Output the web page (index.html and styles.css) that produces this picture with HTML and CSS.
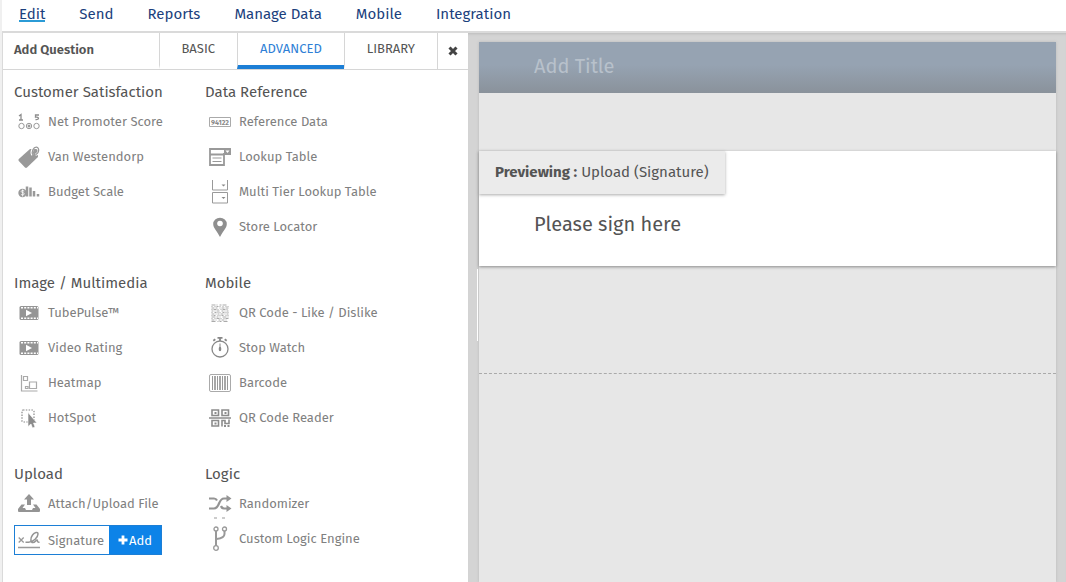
FILE: index.html
```html
<!DOCTYPE html>
<html lang="en">
<head>
<meta charset="utf-8">
<meta name="viewport" content="width=device-width, initial-scale=1">
<title>Survey editor</title>
<link rel="stylesheet" href="styles.css">
</head>
<body>
<div class="app">
  <nav class="main-nav">
    <a class="active" href="#edit">Edit</a>
    <a href="#send">Send</a>
    <a href="#reports">Reports</a>
    <a href="#data">Manage Data</a>
    <a href="#mobile">Mobile</a>
    <a href="#integration">Integration</a>
  </nav>
  <div class="workspace">
    <aside class="library">
      <header class="tabs">
        <h2 class="tabs-title">Add Question</h2>
        <button class="tab" type="button">BASIC</button>
        <button class="tab selected" type="button">ADVANCED</button>
        <button class="tab" type="button">LIBRARY</button>
        <button class="close" type="button" aria-label="Close"><svg width="10" height="10" viewBox="0 0 10 10"><path d="M1.5 1.5l7 7M8.500 1.500l-7 7" stroke="#444" stroke-width="3"/></svg></button>
      </header>
      <div class="groups">
        <section class="group">
          <h3>Customer Satisfaction</h3>
          <ul>
            <li><a href="#nps"><svg class="icon" viewBox="0 0 22 22"><path d="M1 5l2-1.500V9M1 9h4M21 4h-3.500v2.200c4-.7 4 2.800 0 2.300" fill="none" stroke="#8d8d8d" stroke-width="1.300"/><g fill="none" stroke="#999"><circle cx="3.500" cy="15" r="2.700"/><circle cx="11" cy="15" r="2.700"/><circle cx="18.500" cy="15" r="2.700"/></g><circle cx="11" cy="15" r="1.500" fill="#999"/></svg>Net Promoter Score</a></li>
            <li><a href="#westendorp"><svg class="icon" viewBox="0 0 22 22"><path d="M12 3h6q2 0 2 2v6L9 21.500q-1 .8-2 0L.8 15q-.8-1 0-2z" fill="#999"/><path d="M14.500 9c-2-3 .5-8.500 4-8.200 3.500.5 3 7-1 7.700" fill="none" stroke="#fff" stroke-width="2.400"/><path d="M15 9c-2-3 .5-8 3.500-7.800 3.500.5 2.500 6.500-1 7.300" fill="none" stroke="#999" stroke-width="1.300"/></svg>Van Westendorp</a></li>
            <li><a href="#budget"><svg class="icon" viewBox="0 0 22 22"><circle cx="4.500" cy="12" r="4.200" fill="#999"/><path d="M6.200 10q-3-1.500-3 .5c0 1.500 3 .5 3 2.300 0 1.800-3 1-3.200.5M4.600 8.500v7" fill="none" stroke="#fff" stroke-width=".8"/><path d="M9 15.500V5.500M12.500 15.500v-9M16 15.500V10M20 15.500V13" stroke="#999" stroke-width="2.500"/></svg>Budget Scale</a></li>
          </ul>
        </section>
        <section class="group">
          <h3>Data Reference</h3>
          <ul>
            <li><a href="#reference"><svg class="icon" viewBox="0 0 22 22"><path d="M.5 6.500h21v9H.5z" fill="none" stroke="#aaa"/><text class="icon-digits" x="11" y="14" text-anchor="middle">94122</text></svg>Reference Data</a></li>
            <li><a href="#lookup"><svg class="icon" viewBox="0 0 22 22"><path d="M1 3h20v5h-6v11H1zM1 8.500h14" fill="none" stroke="#999" stroke-width="1.800"/><path d="M15 2.500h7V9h-7z" fill="#999"/><path d="M16.500 4.500h4l-2 2.500z" fill="#fff"/><path d="M3.500 12h9M3.500 15.500h9" stroke="#999" stroke-width="1.200"/></svg>Lookup Table</a></li>
            <li><a href="#multi"><svg class="icon" viewBox="0 0 22 22"><path d="M3.500-1v10h15V-1M3.500 11.500h15v10.500h-15z" fill="none" stroke="#999"/><path d="M12.500 3.500h4l-2 2zM12.500 16h4l-2 2z" fill="#888"/></svg>Multi Tier Lookup Table</a></li>
            <li><a href="#locator"><svg class="icon" viewBox="0 0 22 22"><path d="M11 21C8 15 4.200 12 4.200 8a6.800 6.300 0 0 1 13.600 0c0 4-3.800 7-6.800 13z" fill="#8f8f8f"/><circle cx="11" cy="7.500" r="2.800" fill="#fff"/></svg>Store Locator</a></li>
          </ul>
        </section>
        <section class="group">
          <h3>Image / Multimedia</h3>
          <ul>
            <li><a href="#tube"><svg class="icon" viewBox="0 0 22 22"><rect x="1.500" y="4" width="19" height="14" rx="1.500" fill="#959595"/><path d="M3 5.700h17M3 16.300h17" stroke="#fff" stroke-width="1.500" stroke-dasharray="2 1.200"/><path d="M8 7.800l6 3.200-6 3.200z" fill="#fff"/></svg>TubePulse™</a></li>
            <li><a href="#video"><svg class="icon" viewBox="0 0 22 22"><rect x="1.500" y="4" width="19" height="14" rx="1.500" fill="#959595"/><path d="M3 5.700h17M3 16.300h17" stroke="#fff" stroke-width="1.500" stroke-dasharray="2 1.200"/><path d="M8 7.800l6 3.200-6 3.200z" fill="#fff"/></svg>Video Rating</a></li>
            <li><a href="#heatmap"><svg class="icon" viewBox="0 0 22 22"><path d="M3.500 3v16h16M5.500 4.500h4v4h-4zM11.500 10h7v6.500h-7zM7.500 14.500h2.500v2H7.500z" fill="none" stroke="#aaa" stroke-width="1.200"/></svg>Heatmap</a></li>
            <li><a href="#hotspot"><svg class="icon" viewBox="0 0 22 22"><rect x="4" y="3" width="12" height="12" rx="1" fill="none" stroke="#888" stroke-width="1.200" stroke-dasharray="1.500 1.300"/><path d="M10 5.500v14l3-2.500 1.500 4 2.500-1-1.500-4h3.500z" fill="#8c8c8c" stroke="#fff" stroke-width=".6"/></svg>HotSpot</a></li>
          </ul>
        </section>
        <section class="group">
          <h3>Mobile</h3>
          <ul>
            <li><a href="#qr"><svg class="icon" viewBox="0 0 22 22"><g fill="none" stroke="#aaa" stroke-width="1.200"><path d="M2.500 3h17" stroke-dasharray="4 1 1 2 2 1 4 2"/><path d="M2.500 4.500h17" stroke-dasharray="1 2 1 1 2 1 1 2"/><path d="M2.500 6h17" stroke-dasharray="3 1 2 2 1 1 3 1"/><path d="M2.500 7.500h17" stroke-dasharray="1 1 3 1 1 2"/><path d="M2.500 9h17" stroke-dasharray="2 1 1 1 3 2"/><path d="M2.500 10.500h17" stroke-dasharray="1 2 2 1 1 1"/><path d="M2.500 12h17" stroke-dasharray="3 1 1 1 2 1"/><path d="M2.500 13.500h17" stroke-dasharray="1 1 2 2 1 1"/><path d="M2.500 15h17" stroke-dasharray="4 1 2 1 1 2"/><path d="M2.500 16.500h17" stroke-dasharray="1 2 1 1 3 1"/><path d="M2.500 18h17" stroke-dasharray="3 1 1 2 2 1"/><path d="M2.500 19.500h17" stroke-dasharray="4 2 1 1 2 2"/></g></svg>QR Code - Like / Dislike</a></li>
            <li><a href="#watch"><svg class="icon" viewBox="0 0 22 22"><circle cx="11" cy="12" r="8" fill="none" stroke="#888" stroke-width="1.300"/><path d="M8.500.8h5M11 1v3M4.300 3.800l2-1.500M17.700 3.800l-2-1.500" stroke="#888" stroke-width="1.800"/><path d="M11 6.500v4" stroke="#888"/><ellipse cx="11" cy="12" rx="1.300" ry="2.300" fill="#888"/></svg>Stop Watch</a></li>
            <li><a href="#barcode"><svg class="icon" viewBox="0 0 22 22"><rect x=".5" y="2.500" width="21" height="17" rx="1.500" fill="none" stroke="#aaa"/><path d="M3.500 4v14M8.500 4v14M13.500 4v14M18.500 4v14" stroke="#999"/><path d="M6 4v14M11 4v14M16 4v14" stroke="#999" stroke-width="1.700"/></svg>Barcode</a></li>
            <li><a href="#reader"><svg class="icon" viewBox="0 0 22 22"><g fill="none" stroke="#8c8c8c" stroke-width="1.600"><path d="M3 3h6.500v5.500H3zM13 3h6.500v5.500H13zM3 13.500h6.500v5.500H3zM0 11h22M13 19.500v-6h3v3h4v-4"/></g><path d="M5.500 5h2v2h-2zM15.500 5h2v2h-2zM5.500 15.500h2v2h-2zM15 18h2v2h-2zM18.500 18h2v2h-2z" fill="#8c8c8c"/></svg>QR Code Reader</a></li>
          </ul>
        </section>
        <section class="group">
          <h3>Upload</h3>
          <ul>
            <li><a href="#attach"><svg class="icon" viewBox="0 0 22 22"><path d="M11 1l5 5.500h-3V12H9V6.500H6zM3.500 11.500H7L4.500 15H7l1 2h6l1-2h2.500L15 11.500h3.500L22 16v2q0 1-1 1H1q-1 0-1-1v-2z" fill="#949494"/></svg>Attach/Upload File</a></li>
            <li class="picked"><a href="#signature"><svg class="icon" viewBox="0 0 22 22"><path d="M0 18.500h22M.7 8.500l5 5M5.700 8.500l-5 5" stroke="#999" stroke-width="1.300"/><path d="M7.500 13.300h3c5-.5 9.500-5 9.500-8.300 0-2.500-3.500-2-5.500 1-2.500 3.500-2 7.500.5 7.500 2 0 2.500-2 4-2.500 1 0-.5 2.500 2.500 2.200" fill="none" stroke="#949494" stroke-width="1.500"/></svg>Signature</a><button class="add" type="button"><svg width="10" height="10" viewBox="0 0 10 10"><path d="M5 .5v9M.5 5h9" stroke="#fff" stroke-width="2.800"/></svg>Add</button></li>
          </ul>
        </section>
        <section class="group">
          <h3>Logic</h3>
          <ul>
            <li><a href="#random"><svg class="icon" viewBox="0 0 22 22"><path d="M0 5.500h5q2 0 3 2M0 15.500h5c6 0 4-10 10-10h3M12 13q1 2.500 3 2.500h3" fill="none" stroke="#949494" stroke-width="2.200"/><path d="M17.500 2l5 3.500-5 3.500zM17.500 12l5 3.500-5 3.500z" fill="#949494"/></svg>Randomizer</a></li>
            <li><a href="#engine"><svg class="icon" viewBox="0 0 22 22"><path d="M5-10h3M13-10h3" stroke="#999"/><path d="M7 3v15M15.500 3v3q0 4-8 5" fill="none" stroke="#999" stroke-width="2"/><g fill="#fff" stroke="#999" stroke-width="1.300"><circle cx="7" cy="1" r="2"/><circle cx="15.500" cy="1" r="2"/><circle cx="7" cy="20" r="2.300"/></g></svg>Custom Logic Engine</a></li>
          </ul>
        </section>
      </div>
    </aside>
    <main class="canvas">
      <article class="survey">
        <input class="survey-title" type="text" placeholder="Add Title" aria-label="Survey title">
        <section class="preview">
          <p class="preview-label"><strong>Previewing :</strong> Upload (Signature)</p>
          <p class="question">Please sign here</p>
        </section>
        <hr class="page-break">
      </article>
    </main>
  </div>
</div>
</body>
</html>
```
FILE: styles.css
```css
* {
  box-sizing: border-box;
}

body {
  margin: 0;
  background: #fff;
  color: #545454;
  font-family: "Fira Sans", "Noto Sans", "Open Sans", sans-serif;
  font-size: 13px;
}

h2, h3, p, ul {
  margin: 0;
  padding: 0;
}

a {
  color: inherit;
  text-decoration: none;
}

button, input {
  border: 0;
  padding: 0;
  background: none;
  color: inherit;
  font: inherit;
}

svg {
  display: block;
  flex: none;
}

.app {
  display: flex;
  flex-direction: column;
  min-height: 100vh;
  border-left: 2px solid #f0f0f0;
}

.main-nav {
  display: flex;
  gap: 34px;
  padding: 4px 17px 7px;
  border-bottom: 2px solid #dadada;
  color: #1b3f7d;
  font-size: 15px;
  line-height: 20px;
}

.main-nav .active {
  height: 18px;
  border-bottom: 2px solid #2b9bd6;
}

.workspace {
  display: flex;
  flex: 1;
}

.library {
  width: 466px;
  flex: none;
  border-left: 1px solid #dadada;
}

.tabs {
  display: flex;
  height: 37px;
  border-bottom: 1px solid #d6d6d6;
}

.tabs-title {
  flex: 1;
  padding-left: 11px;
  font-size: 13px;
  font-weight: 600;
  line-height: 33px;
}

.tab, .close {
  border-left: 1px solid #d6d6d6;
}

.tab {
  padding: 0 22px;
  font-size: 13px;
  line-height: 32px;
  border-bottom: 4px solid transparent;
}

.tab.selected {
  border-bottom-color: #1c7fd6;
  color: #2f7fd6;
}

.close {
  display: flex;
  align-items: center;
  justify-content: center;
  width: 31px;
}

.groups {
  display: grid;
  grid-template-columns: 191px 1fr;
  row-gap: 27px;
  padding: 10px 11px;
}

.group h3 {
  font-size: 15px;
  font-weight: 400;
  line-height: 24px;
}

.group ul {
  list-style: none;
}

.group li {
  display: flex;
  align-items: center;
  height: 35px;
  color: #808080;
}

.group li a {
  display: flex;
  align-items: center;
  gap: 8px;
  padding-left: 4px;
}

.icon {
  width: 22px;
  height: 22px;
  overflow: visible;
}

.icon-digits {
  fill: #888;
  font-size: 7px;
  font-weight: 700;
}

.group .picked {
  width: 148px;
  height: 30px;
  margin-top: 4px;
  border: 1px solid #1c7fd6;
}

.group .picked a {
  flex: 1;
  padding-left: 3px;
}

.add {
  display: flex;
  align-items: center;
  justify-content: center;
  gap: 1px;
  width: 52px;
  align-self: stretch;
  background: #0d83e8;
  color: #fff;
}

.canvas {
  display: flex;
  flex: 1;
  padding: 9px 10px 0 11px;
  background: #d4d4d4;
  box-shadow: inset 0 3px 3px -2px #bbb;
}

.survey {
  position: relative;
  flex: 1;
  background: #e7e7e7;
  box-shadow: 0 0 3px #bbb;
}

.survey::before {
  content: "";
  position: absolute;
  top: 227px;
  left: -2px;
  width: 1px;
  height: 72px;
  background: #fff;
}

.survey-title {
  display: block;
  width: 100%;
  height: 51px;
  padding: 0 55px 4px;
  background: linear-gradient(#96a3b2, #96a3b2 45%, #8a929b);
  font-size: 20px;
}

.survey-title::placeholder {
  color: #b8c1cb;
  opacity: 1;
}

.preview {
  margin-top: 58px;
  padding-bottom: 27px;
  background: #fff;
  box-shadow: 0 1px 3px #888;
}

.preview-label {
  width: fit-content;
  padding: 10px 16px 11px;
  background: #ebebeb;
  box-shadow: 0 1px 3px #aaa;
  font-size: 15px;
  line-height: 22px;
}

.question {
  padding: 16px 55px 1px;
  font-size: 20px;
  line-height: 28px;
}

.page-break {
  margin: 107px 0 0;
  border: 0;
  border-top: 1px dashed #aaa;
}
```
